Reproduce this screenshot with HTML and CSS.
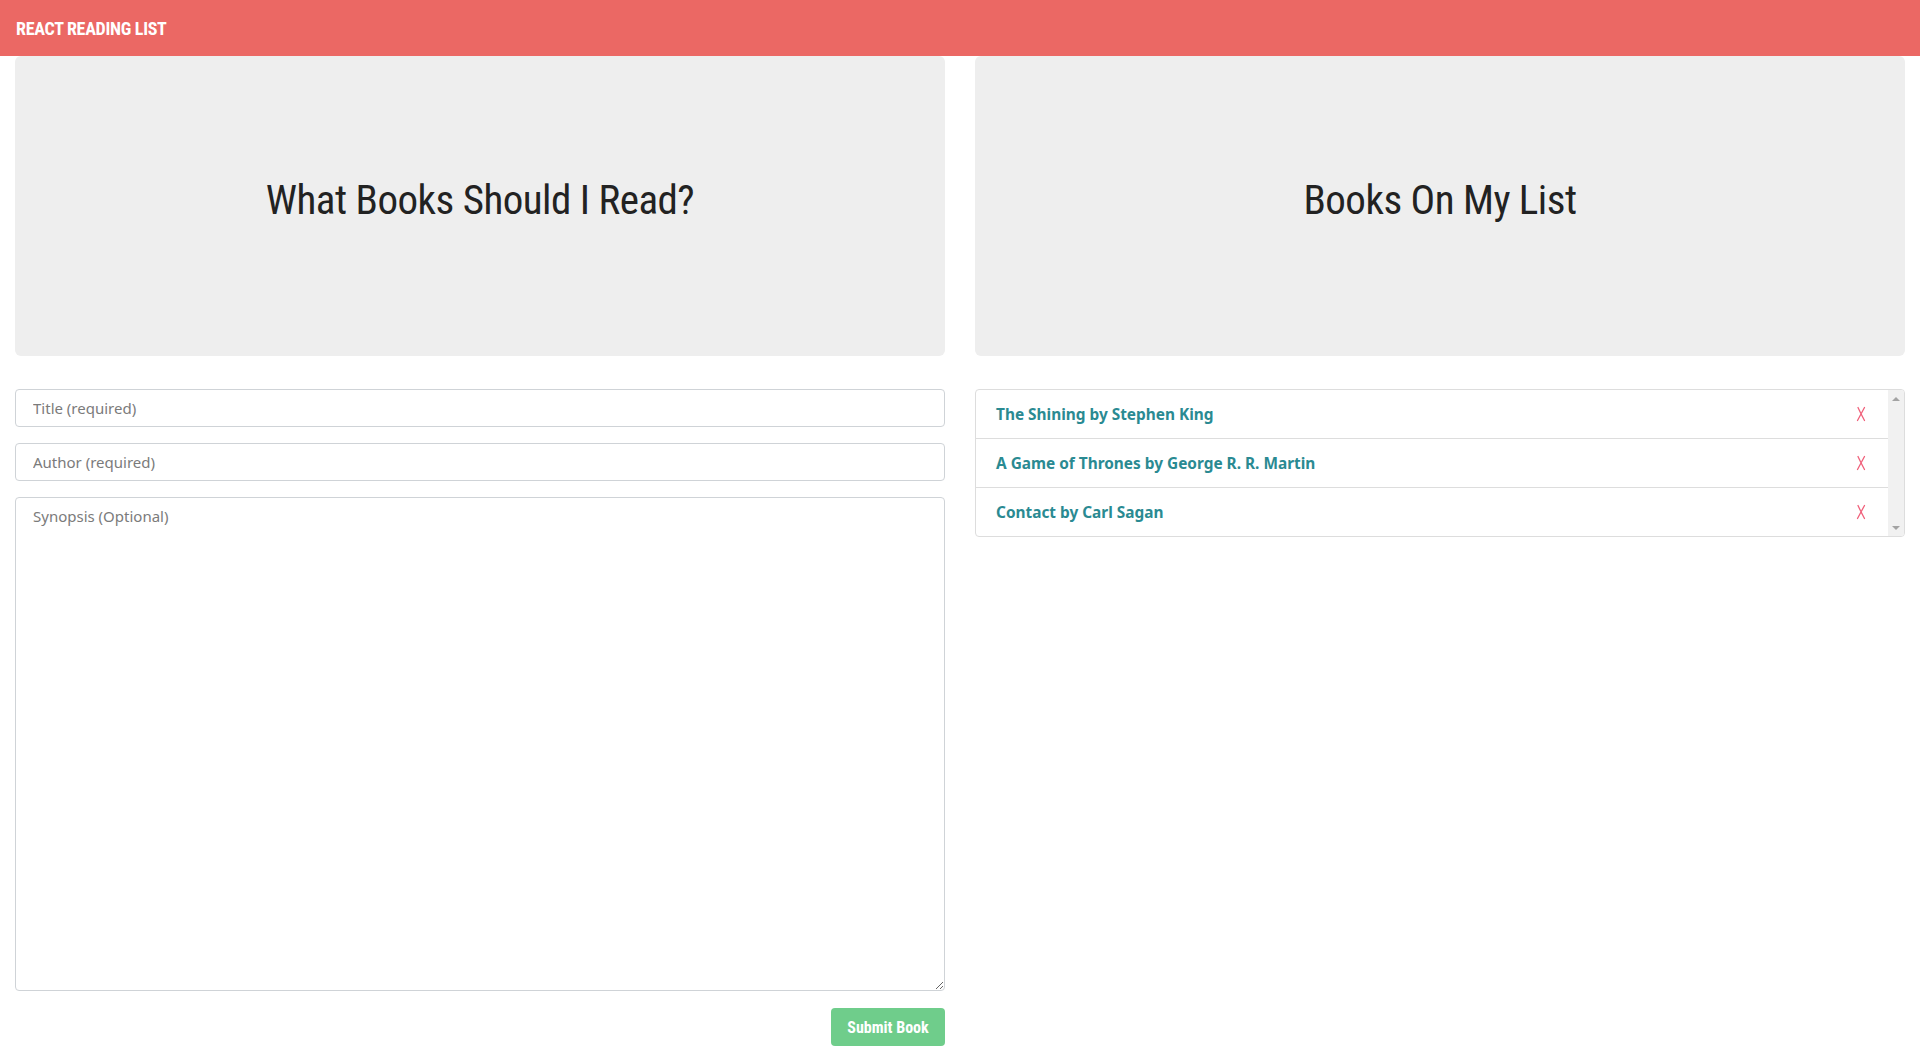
FILE: index.html
```html
<!DOCTYPE html>
<html lang="en">
<head>
<meta charset="utf-8">
<title>React Reading List</title>
<link rel="stylesheet" href="styles.css">
</head>
<body>
<header class="navbar">
  <span class="brand">React Reading List</span>
</header>
<main class="container">
  <section class="col">
    <div class="jumbotron"><h1 class="jumbo-title">What Books Should I Read?</h1></div>
    <form class="book-form">
      <input class="form-control" type="text" placeholder="Title (required)">
      <input class="form-control" type="text" placeholder="Author (required)">
      <textarea class="form-control synopsis" placeholder="Synopsis (Optional)"></textarea>
      <div class="form-actions">
        <button class="btn-submit" type="button" disabled>Submit Book</button>
      </div>
    </form>
  </section>
  <section class="col">
    <div class="jumbotron"><h1 class="jumbo-title">Books On My List</h1></div>
    <div class="list-group">
      <ul class="list-items">
        <li class="list-item"><span class="book">The Shining by Stephen King</span><svg class="remove" viewBox="0 0 10 16" aria-label="remove"><path d="M2 1.5 Q5 8 8.5 14.5 M8.5 1.5 Q5 8 1.5 14.5"/></svg></li>
        <li class="list-item"><span class="book">A Game of Thrones by George R. R. Martin</span><svg class="remove" viewBox="0 0 10 16" aria-label="remove"><path d="M2 1.5 Q5 8 8.5 14.5 M8.5 1.5 Q5 8 1.5 14.5"/></svg></li>
        <li class="list-item"><span class="book">Contact by Carl Sagan</span><svg class="remove" viewBox="0 0 10 16" aria-label="remove"><path d="M2 1.5 Q5 8 8.5 14.5 M8.5 1.5 Q5 8 1.5 14.5"/></svg></li>
      </ul>
      <div class="scrollbar">
        <span class="arrow arrow-up"></span>
        <span class="arrow arrow-down"></span>
      </div>
    </div>
  </section>
</main>
</body>
</html>
```
FILE: styles.css
```css
* { box-sizing: border-box; }
html, body { margin: 0; padding: 0; }
body {
  font-family: "Noto Sans", "Open Sans", sans-serif;
  color: #222;
  background: #fff;
  height: 1054px;
  overflow: hidden;
}
.navbar {
  height: 56px;
  background: #eb6864;
  display: flex;
  align-items: center;
  padding: 0 16px;
}
.brand {
  font-family: "Liberation Sans Narrow", "Roboto Condensed", "DejaVu Sans Condensed", sans-serif;
  font-weight: 700;
  font-size: 18px;
  color: #fff;
  text-transform: uppercase;
  letter-spacing: -0.3px;
}
.container {
  display: grid;
  grid-template-columns: 1fr 1fr;
  column-gap: 30px;
  padding: 0 15px;
}
.col { display: flex; flex-direction: column; }
.jumbotron {
  height: 300px;
  background: #eeeeee;
  border-radius: 6px;
  display: flex;
  align-items: center;
  justify-content: center;
  padding-bottom: 12px;
  margin-bottom: 33px;
}
.jumbo-title {
  margin: 0;
  font-family: "Liberation Sans Narrow", "Roboto Condensed", "DejaVu Sans Condensed", sans-serif;
  font-weight: 400;
  font-size: 41px;
  color: #222;
  letter-spacing: -0.5px;
}
.book-form { display: flex; flex-direction: column; }
.form-control {
  display: block;
  width: 100%;
  height: 38px;
  margin: 0 0 16px 0;
  padding: 0 17px;
  border: 1px solid #cfd3d7;
  border-radius: 4px;
  font-family: "Noto Sans", "Open Sans", sans-serif;
  font-size: 15px;
  color: #333;
  background: #fff;
  outline: none;
}
.form-control::placeholder { color: #7b7b7b; }
.synopsis {
  height: 494px;
  padding: 8px 17px;
  margin-bottom: 17px;
  resize: vertical;
}
.form-actions { display: flex; justify-content: flex-end; }
.btn-submit {
  width: 114px;
  height: 38px;
  border: 0;
  border-radius: 4px;
  background: #6fcd8b;
  color: #fff;
  font-family: "Liberation Sans Narrow", "Roboto Condensed", "DejaVu Sans Condensed", sans-serif;
  font-weight: 700;
  font-size: 16px;
  padding: 0;
}
.list-group {
  display: flex;
  border: 1px solid #dddddd;
  border-radius: 4px;
  overflow: hidden;
}
.list-items {
  flex: 1;
  list-style: none;
  margin: 0;
  padding: 0;
}
.list-item {
  height: 49px;
  display: flex;
  align-items: center;
  justify-content: space-between;
  padding: 0 22px 0 20px;
  border-bottom: 1px solid #dddddd;
}
.list-item:last-child { height: 48px; border-bottom: 0; }
.book {
  font-weight: 700;
  font-size: 15.4px;
  color: #2a8a92;
}
.remove {
  width: 10px;
  height: 16px;
  fill: none;
  stroke: #f0607a;
  stroke-width: 1.3;
  stroke-linecap: round;
}
.scrollbar {
  width: 16px;
  background: #f1f1f1;
  display: flex;
  flex-direction: column;
  justify-content: space-between;
  align-items: center;
  padding: 7px 0 6px;
}
.arrow {
  width: 0;
  height: 0;
  border-left: 4px solid transparent;
  border-right: 4px solid transparent;
}
.arrow-up { border-bottom: 4px solid #a3a3a3; }
.arrow-down { border-top: 4px solid #a3a3a3; }
```
